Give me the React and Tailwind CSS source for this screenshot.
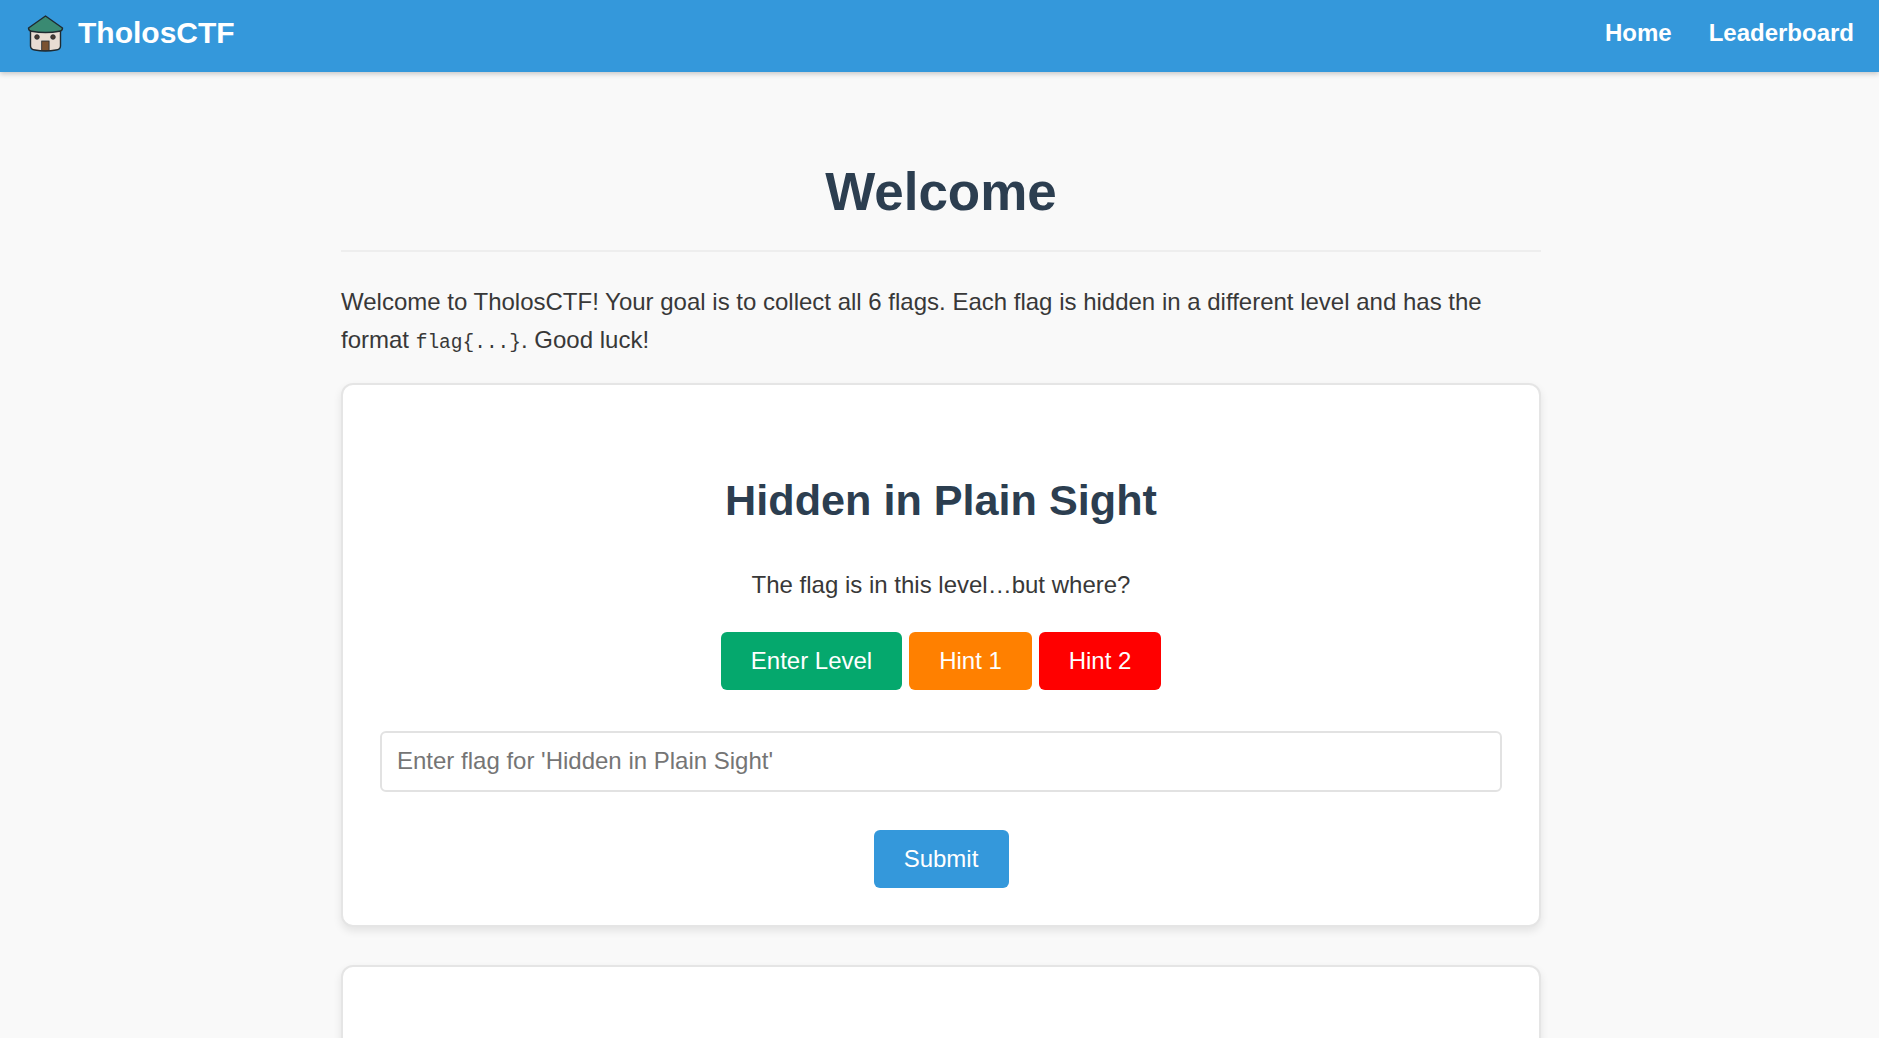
export default function App() {
  return (
    <div className="h-[1038px] overflow-hidden bg-[#f9f9f9] text-[#383838] font-['Liberation_Sans',Arial,sans-serif] text-[24px] leading-[38px]">
      <header className="h-[72px] bg-[#3498db] flex items-start justify-between pl-[27px] pr-[25px] shadow-[0_2px_5px_rgba(0,0,0,0.2)]">
        <div className="flex items-center gap-[14px] h-[66px]">
          <svg width="37" height="37" viewBox="0 0 37 37" className="block">
            <path d="M3.5 15 V31 Q3.5 34.5 8 35 Q18.5 37 29 35 Q33.5 34.5 33.5 31 V15 Z" fill="#e8dcd2" stroke="#1f2a30" strokeWidth="1.4" />
            <path d="M18.5 1 L35.5 13 Q35.5 16 32.5 16.3 Q18.5 18.8 4.5 16.3 Q1.5 16 1.5 13 Z" fill="#3a8a72" stroke="#1f2a30" strokeWidth="1.4" strokeLinejoin="round" />
            <circle cx="10" cy="22" r="2.3" fill="#4a3a32" stroke="#1f2a30" strokeWidth="0.8" />
            <circle cx="26" cy="22" r="2.3" fill="#4a3a32" stroke="#1f2a30" strokeWidth="0.8" />
            <rect x="14.7" y="26" width="7.4" height="9.4" fill="#7a5230" stroke="#1f2a30" strokeWidth="0.8" />
          </svg>
          <span className="text-white font-bold text-[30px]">TholosCTF</span>
        </div>
        <nav className="flex items-center gap-[37px] h-[66px] text-white font-bold text-[24px]">
          <a>Home</a>
          <a>Leaderboard</a>
        </nav>
      </header>
      <main className="w-[1200px] ml-[341px] pt-[84px]">
        <h1 className="text-center text-[#2c3e50] font-bold text-[53px] leading-[72px] pb-[22px] border-b-2 border-[#eeeeee]">Welcome</h1>
        <p className="mt-[31px]">
          Welcome to TholosCTF! Your goal is to collect all 6 flags. Each flag is hidden in a different level and has the format{" "}
          <code className="font-['Liberation_Mono','DejaVu_Sans_Mono',monospace] text-[19.5px]">flag{"{...}"}</code>. Good luck!
        </p>
        <section className="mt-[21px] h-[544px] bg-white border-2 border-[#e5e5e5] rounded-[12px] shadow-[0_4px_8px_rgba(0,0,0,0.09)] px-[37px] pt-[89px] flex flex-col items-center">
          <h2 className="text-[#2c3e50] font-bold text-[43.2px] leading-[52px]">Hidden in Plain Sight</h2>
          <p className="mt-[40px]">The flag is in this level…but where?</p>
          <div className="mt-[28px] flex gap-[7px] h-[58px]">
            <button className="w-[181px] rounded-[6px] bg-[#05a86d] text-white">Enter Level</button>
            <button className="w-[123px] rounded-[6px] bg-[#ff8000] text-white">Hint 1</button>
            <button className="w-[122px] rounded-[6px] bg-[#ff0000] text-white">Hint 2</button>
          </div>
          <input
            className="mt-[41px] w-full h-[61px] px-[15px] pb-[1px] bg-white border-2 border-[#e2e2e2] rounded-[6px] outline-none placeholder:text-[#757575]"
            placeholder="Enter flag for 'Hidden in Plain Sight'"
          />
          <button className="mt-[38px] w-[135px] h-[58px] rounded-[6px] bg-[#3498db] text-white">Submit</button>
        </section>
        <section className="mt-[38px] h-[200px] bg-white border-2 border-[#e5e5e5] rounded-[12px] shadow-[0_4px_8px_rgba(0,0,0,0.09)]" />
      </main>
    </div>
  );
}
